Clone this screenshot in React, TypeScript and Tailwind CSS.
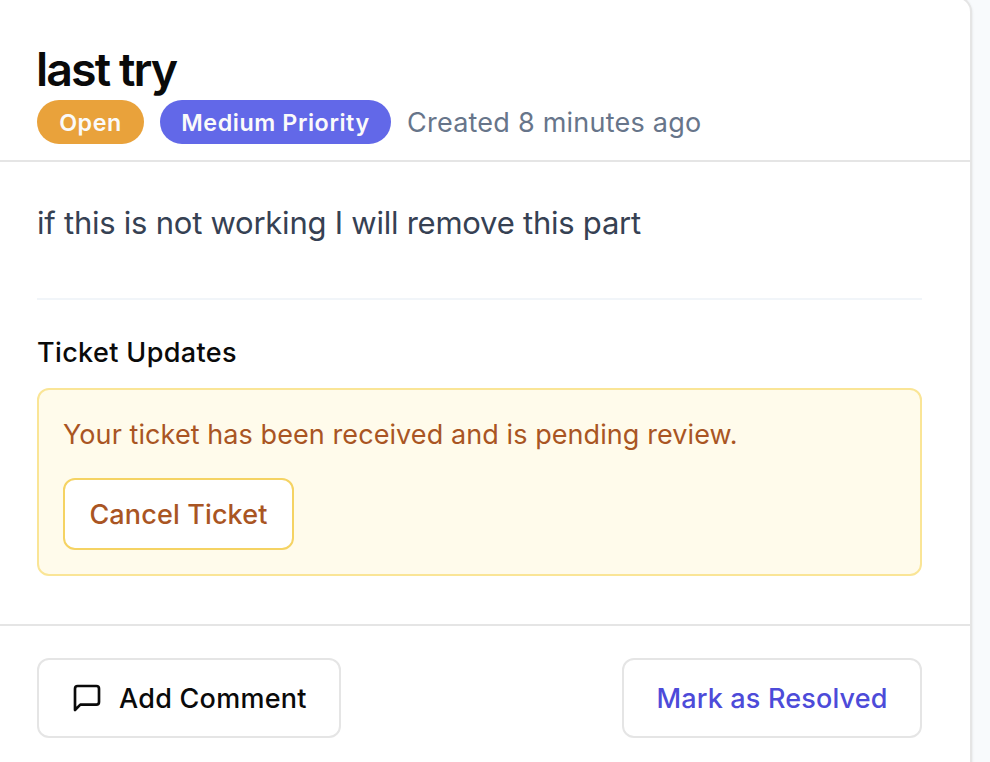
export default function App() {
  return (
    <div className="h-[762px] w-[990px] overflow-hidden bg-[#f8fafc] font-['Inter',sans-serif]">
      <main className="-mt-1 flex h-[800px] w-[972px] flex-col rounded-tr-[16px] border-t-2 border-r-2 border-[#e5e5e5] bg-white pt-[2px] shadow-sm">
        <header className="h-[162px] border-b-2 border-[#e5e5e5] pt-[45px] pl-[37px]">
          <h1 className="-ml-px h-[55px] text-[46.5px] leading-[48px] font-semibold tracking-[-1.9px] text-[#0a0a0a]">last try</h1>
          <div className="flex h-[44px] items-center">
            <span className="flex h-[44px] w-[107px] items-center justify-center rounded-full bg-[#e9a23b] pt-[3px] text-[23.3px] font-semibold tracking-[0.55px] text-[#fafafa]">Open</span>
            <span className="ml-4 flex h-[44px] w-[231px] items-center justify-center rounded-full bg-[#6268e8] pt-[3px] text-[23.3px] font-semibold tracking-[0.57px] text-[#fafafa]">Medium Priority</span>
            <span className="ml-4 pt-[2px] text-[27px] tracking-[0.23px] whitespace-nowrap text-[#67758a]">Created 8 minutes ago</span>
          </div>
        </header>
        <section className="h-[464px] border-b-2 border-[#e5e5e5] pr-[48px] pl-[37px]">
          <p className="h-[138px] border-b-2 border-[#f1f5f9] pt-[37px] text-[31px] leading-[48px] tracking-[-0.24px] text-[#364153]">if this is not working I will remove this part</p>
          <h2 className="mt-[32px] pt-px text-[27px] leading-[39px] font-medium tracking-[0.37px] text-[#0a0a0a]">Ticket Updates</h2>
          <div className="mt-4 h-[188px] rounded-[12px] border-2 border-[#fae596] bg-[#fffbeb] px-6 pt-6">
            <p className="pt-px text-[27px] leading-[39px] tracking-[0.08px] text-[#a95523]">Your ticket has been received and is pending review.</p>
            <button className="mt-6 h-[72px] w-[231px] rounded-[12px] border-2 border-[#f5d363] bg-white pt-[2px] text-[27px] font-medium tracking-[0.14px] text-[#a95523]">Cancel Ticket</button>
          </div>
        </section>
        <footer className="flex justify-between pt-8 pr-[48px] pl-[37px]">
          <button className="flex h-[80px] w-[304px] items-center rounded-[12px] border-2 border-[#e5e5e5] pl-8 text-[27px] font-medium tracking-[0.26px] text-[#0a0a0a]">
            <svg className="mr-4 size-8" viewBox="0 0 24 24" fill="none" stroke="currentColor" strokeWidth="2" strokeLinecap="round" strokeLinejoin="round">
              <path d="M21 15a2 2 0 0 1-2 2H7l-4 4V5a2 2 0 0 1 2-2h14a2 2 0 0 1 2 2z" />
            </svg>
            <span className="pt-[2px]">Add Comment</span>
          </button>
          <button className="h-[80px] w-[300px] rounded-[12px] border-2 border-[#e5e5e5] pt-[2px] text-[27px] font-medium tracking-[0.16px] text-[#4d4bd9]">Mark as Resolved</button>
        </footer>
      </main>
    </div>
  );
}
